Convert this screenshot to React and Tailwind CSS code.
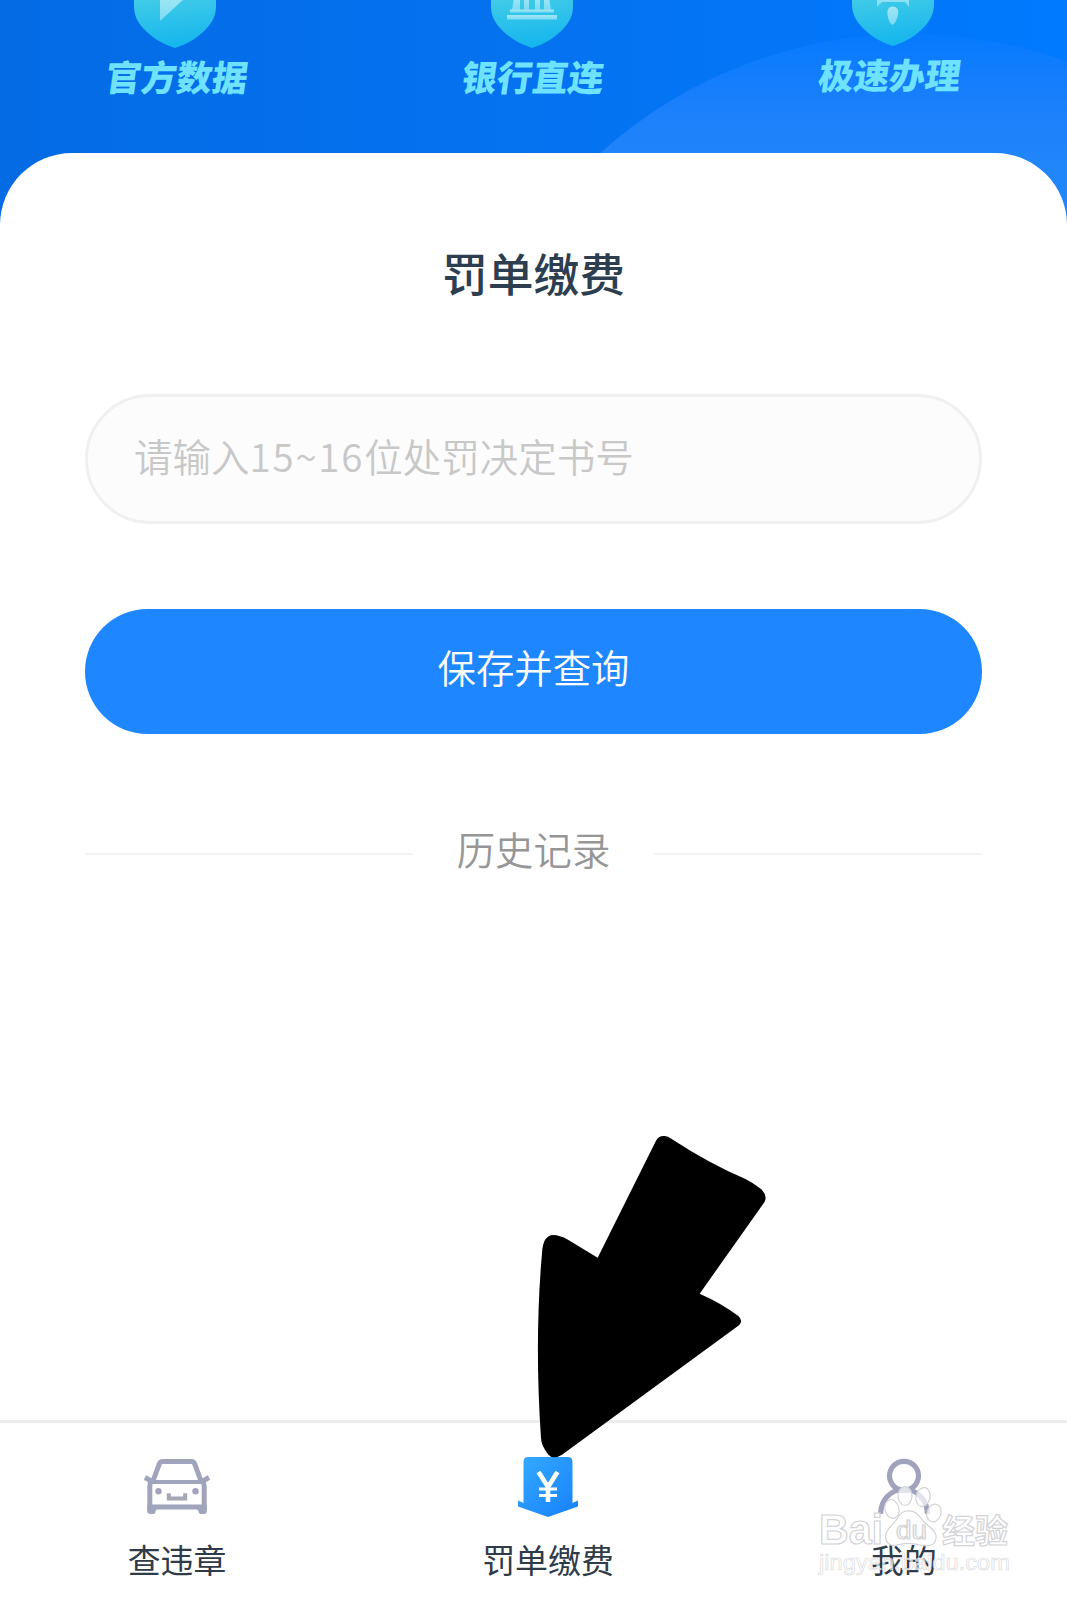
import clsx from 'clsx'

function Shield({ id, children }) {
  return (
    <svg width="84" height="48" viewBox="0 0 84 48" className="block">
      <defs>
        <linearGradient id={id} x1="0" y1="0" x2="0.15" y2="1">
          <stop offset="0" stopColor="#4ad0e6" />
          <stop offset="1" stopColor="#16b6ee" />
        </linearGradient>
        <linearGradient id={`${id}-glyph`} x1="0" y1="0" x2="0" y2="1">
          <stop offset="0" stopColor="#a3e6f3" />
          <stop offset="1" stopColor="#7bdbf4" />
        </linearGradient>
      </defs>
      <path d="M1 -10H83V6C83 15 79.500 22 74 28C66 37 55 44 42 48C29 44 18 37 10 28C4.500 22 1 15 1 6Z" fill={`url(#${id})`} />
      <g fill={`url(#${id}-glyph)`}>{children}</g>
    </svg>
  )
}

function PlayGlyph() {
  return <path d="M27 -4V21L52 -2V-4Z" />
}

function BankGlyph() {
  return (
    <>
      <path d="M24 -2h6v12h-8zM34 -2h5v12h-5zM45 -2h5v12h-5zM54 -2h5l2 12h-7z" />
      <rect x="20" y="9.500" width="44" height="3" />
      <rect x="17" y="15" width="50" height="4.500" />
    </>
  )
}

function RocketGlyph() {
  return (
    <>
      <path d="M26 -4H58V9L54 4H31L26 9Z" />
      <path d="M41.500 8.500C46 8.500 48 11.500 47 16.500C46 22 43.500 26 41.500 27C39.500 26 37 22 36.500 16.500C36 11.500 38 8.500 41.500 8.500Z" />
    </>
  )
}

function Feature({ id, label, className, labelClass, children }) {
  return (
    <div className={clsx('flex w-[160px] flex-col items-center', className)}>
      <Shield id={id}>{children}</Shield>
      <span className={clsx('mt-[5px] block -skew-x-[8deg] whitespace-nowrap text-[35.500px] font-black leading-[46px] text-[#6ee2ff]', labelClass)}>
        {label}
      </span>
    </div>
  )
}

function CarIcon() {
  return (
    <svg width="70" height="58" viewBox="0 0 70 58" fill="none" stroke="#a0a5bd" strokeWidth="5">
      <path d="M11 24L17.500 6.500Q18.300 4.500 20.500 4.500H49.500Q51.700 4.500 52.500 6.500L59 24" />
      <path d="M8.500 25H61.500" strokeWidth="4" />
      <path d="M3 20.500L10 24.500M67 20.500L60 24.500" />
      <path d="M7.800 53V29Q7.800 26 10 23M62.200 53V29Q62.200 26 60 23" />
      <path d="M7 50H63" strokeWidth="5" />
      <path d="M5.200 48H14.500V52.500L13.500 54Q13.500 57 11 57H8Q5.200 57 5.200 54ZM55.500 48H64.800V54Q64.800 57 62 57H59Q56.500 57 56.500 54L55.500 52.500Z" fill="#a0a5bd" stroke="none" />
      <circle cx="16.500" cy="34.300" r="3.200" fill="#a0a5bd" stroke="none" />
      <circle cx="53.500" cy="34.300" r="3.200" fill="#a0a5bd" stroke="none" />
      <path d="M26.800 36.300V41.600H43.200V36.300" stroke="#a5a7b5" strokeWidth="4" />
    </svg>
  )
}

function TicketIcon() {
  return (
    <svg width="60" height="60" viewBox="0 0 60 60">
      <defs>
        <linearGradient id="ticket" x1="0" y1="0" x2="1" y2="1">
          <stop offset="0" stopColor="#35aaff" />
          <stop offset="1" stopColor="#1680fb" />
        </linearGradient>
      </defs>
      <path d="M0 43.500L5.500 46V5Q5.500 0 10 0H50Q54.500 0 54.500 5V46L60 43.500V49.500L30 60L0 49.500Z" fill="url(#ticket)" />
      <path d="M20.500 15L30 30L39.500 15M30 29V45" fill="none" stroke="#fff" strokeWidth="4.600" />
      <path d="M21 32H39M21 38.500H39" fill="none" stroke="#fff" strokeWidth="3.200" />
    </svg>
  )
}

function PersonIcon() {
  return (
    <svg width="56" height="58" viewBox="0 0 56 58" fill="none" stroke="#a0a3bc" strokeWidth="5.200">
      <circle cx="28" cy="18.800" r="14.500" />
      <path d="M4.500 57C5 43 14 32.500 28 32.500S51 43 51.500 57" />
    </svg>
  )
}

function NavItem({ icon, label, className }) {
  return (
    <div className={clsx('flex w-[150px] flex-col items-center', className)}>
      <div className="flex h-[60px] items-start justify-center">{icon}</div>
      <span className="mt-[19px] whitespace-nowrap text-[32.900px] leading-[46px] text-[#2f3b48]">{label}</span>
    </div>
  )
}

function Pointer() {
  return (
    <svg className="absolute left-[510px] top-[1110px]" width="280" height="360" viewBox="0 0 840 1080">
      <path
        d="M438 92Q446 76 464 78Q474 79 484 86Q600 162 705 206Q730 218 754 238Q774 258 763 277L569 551Q635 580 685 618Q701 632 687 646L156 1034Q130 1050 115 1034Q94 1008 93 985Q73 690 96 430Q98 376 130 375Q148 375 174 389L263 443Z"
        fill="#000"
      />
    </svg>
  )
}

function Watermark() {
  return (
    <svg className="absolute left-[818px] top-[1484px]" width="200" height="100" viewBox="0 0 200 100" fill="#fff" fillOpacity="0.7" stroke="#d3d3d6" strokeWidth="1.200">
      <ellipse cx="87" cy="12" rx="7" ry="9.500" />
      <ellipse cx="105" cy="13" rx="7" ry="9.500" transform="rotate(12 105 13)" />
      <ellipse cx="74" cy="25" rx="7" ry="9.500" transform="rotate(-15 74 25)" />
      <ellipse cx="116" cy="29" rx="7" ry="9" transform="rotate(20 116 29)" />
      <path d="M89 27C98 26 101 32 106 38C113 44 119 48 118 54C117 62 109 63 102 61C94 59 86 59 79 61C72 63 66 58 68 50C70 43 78 38 81 32C83 29 85 27 89 27Z" />
      <g fontFamily="Liberation Sans, Noto Sans CJK SC, sans-serif">
        <text x="1" y="60" fontSize="42" fontWeight="700" textLength="64" lengthAdjust="spacingAndGlyphs">Bai</text>
        <text x="78" y="55" fontSize="25" textLength="31" lengthAdjust="spacingAndGlyphs">du</text>
        <text x="124" y="59" fontSize="33" fontWeight="700" fontFamily="Noto Sans CJK SC, sans-serif">经验</text>
        <text x="1" y="86" fontSize="21.500" stroke="#d9d9dc" strokeWidth="0.600" textLength="191" lengthAdjust="spacingAndGlyphs">jingyan.baidu.com</text>
      </g>
    </svg>
  )
}

export default function App() {
  return (
    <div className="relative flex h-[1600px] w-[1067px] flex-col overflow-hidden bg-white font-['Noto_Sans_CJK_SC',sans-serif]">
      {/* Banner */}
      <header className="relative h-[230px] shrink-0 overflow-hidden bg-linear-to-r from-[#046be5] via-[#0572f0] to-[#007aff]">
        <div className="absolute left-[448px] top-[34px] size-[924px] rounded-full bg-linear-to-b from-[#047aff] via-[#1b80fb] via-8% to-[#2186fa] to-14%" />
        <div className="relative flex">
          <Feature id="s1" label="官方数据" className="ml-[95px]" labelClass="translate-x-0.5"><PlayGlyph /></Feature>
          <Feature id="s2" label="银行直连" className="ml-[197px]" labelClass="translate-x-px"><BankGlyph /></Feature>
          <Feature id="s3" label="极速办理" className="-mt-0.5 ml-[201px]" labelClass="-translate-x-[3px]"><RocketGlyph /></Feature>
        </div>
      </header>

      {/* Form card */}
      <main className="relative -mt-[77px] flex grow flex-col rounded-t-[72px] bg-white px-[85px]">
        <h1 className="mt-[87px] text-center text-[45.800px] font-medium leading-[64px] text-[#2c3e50]">罚单缴费</h1>
        <div className="mt-[90px] flex h-[130px] items-center rounded-full border-[3px] border-[#f0f0f0] bg-[#fcfcfc] px-[46px] pb-2">
          <span className="whitespace-nowrap text-[38.500px] font-[350] leading-[56px] text-[#c8c8c8]">
            请输入<span className="tracking-[1.800px]">15~16</span>位处罚决定书号
          </span>
        </div>
        <button className="mt-[85px] flex h-[125px] items-center justify-center rounded-full bg-[#1e86ff] pb-3 text-[38.400px] font-[350] leading-[56px] text-white">
          保存并查询
        </button>
        <div className="mt-[86px] flex items-center justify-between">
          <div className="mt-[11px] h-0.5 w-[328px] bg-[#f4f4f4]" />
          <span className="text-[38.400px] font-[350] leading-[56px] text-[#969696]">历史记录</span>
          <div className="mt-[11px] h-0.5 w-[328px] bg-[#f4f4f4]" />
        </div>
      </main>

      {/* Tab bar */}
      <nav className="relative flex h-[180px] shrink-0 border-t-[3px] border-[#ededed] bg-white pt-[34px]">
        <NavItem icon={<CarIcon />} label="查违章" className="ml-[102px]" />
        <NavItem icon={<TicketIcon />} label="罚单缴费" className="ml-[221px]" />
        <NavItem icon={<PersonIcon />} label="我的" className="ml-[206px]" />
      </nav>

      <Pointer />
      <Watermark />
    </div>
  )
}
